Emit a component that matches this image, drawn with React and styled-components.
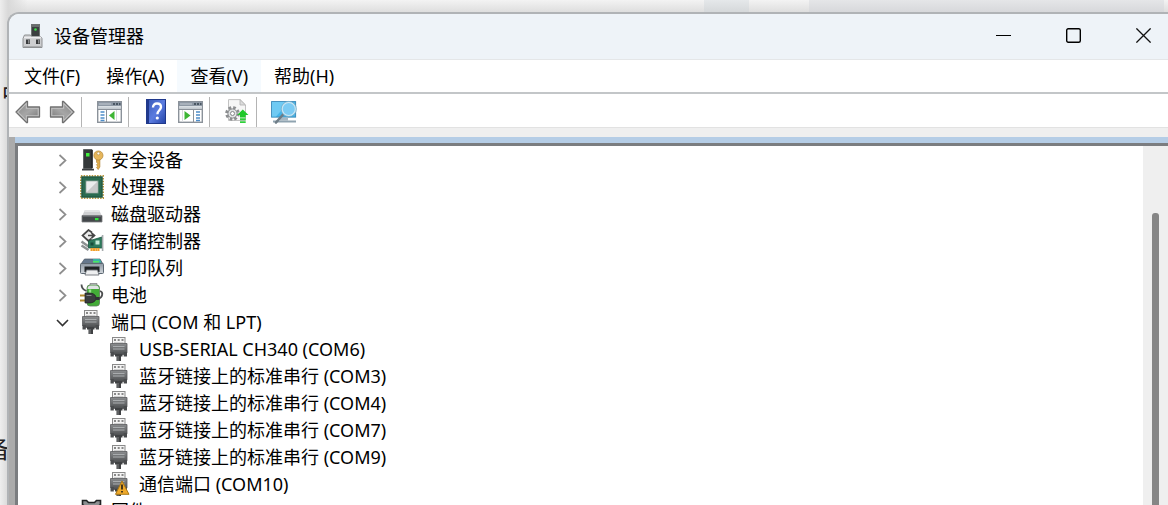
import React from "react";
import styled, { createGlobalStyle } from "styled-components";


const GlobalStyle = createGlobalStyle`
  body {
    margin: 0;
    font-family: "Noto Sans", "Noto Sans CJK SC", sans-serif;
    font-size: 18px;
    color: #000;
  }

  * {
    box-sizing: border-box;
  }
`;


/* 窗口按钮 */
function MinimizeIcon() {
  return (
    <svg width="15" height="15" viewBox="0 0 15 15">
      <path d="M0 7.5H15" stroke="#000" />
    </svg>
  );
}

function MaximizeIcon() {
  return (
    <svg width="15" height="15" viewBox="0 0 15 15">
      <rect x="0.7" y="0.7" width="13.6" height="13.6" rx="1.5" fill="none" stroke="#000" strokeWidth="1.4" />
    </svg>
  );
}

function CloseIcon() {
  return (
    <svg width="15" height="15" viewBox="0 0 15 15">
      <path d="M0.4 0.4L14.6 14.6M14.6 0.4L0.4 14.6" stroke="#111" strokeWidth="1.3" />
    </svg>
  );
}

function AppIcon() {
  return (
    <svg width="22" height="24" viewBox="0 0 22 24">
      <rect x="9.5" y="0.5" width="8" height="12" fill="#3b3f40" stroke="#6d7071" />
      <path d="M10 1h7v2h-7z" fill="#686c6d" />
      <circle cx="13.5" cy="5.5" r="1.3" fill="#3ce04a" />
      <path d="M2.500 11h6l1 1.500h9l1.500 2v9H1v-9z" fill="#cdced0" stroke="#8e9092" />
      <path d="M2 13.500h17" stroke="#ececee" strokeWidth="1.600" />
      <path d="M4 15.500h4v4.500H4zM14 15.500h4v4.500h-4z" fill="#3a3c3e" />
      <path d="M6 16h1.500v3.500H6zM16 16h1.500v3.500h-1.500z" fill="#8a8c8e" />
      <path d="M1.500 22.500h18" stroke="#a9abad" />
    </svg>
  );
}


/* 工具栏图标 */
function ArrowIcon({ flip }) {
  return (
    <svg width="26" height="24" viewBox="0 0 26 24">
      <defs>
        <linearGradient id="arrowFill" x1="0" y1="0" x2="1" y2="1">
          <stop offset="0" stopColor="#8c8c8c" />
          <stop offset="0.5" stopColor="#a6a6a6" />
          <stop offset="1" stopColor="#7a7a7a" />
        </linearGradient>
      </defs>
      <g transform={flip ? "translate(26 0) scale(-1 1)" : undefined}>
        <path d="M1 12L11.500 1.500H12.500V7H24.500V17H12.500V22.500H11.500z" fill="#c2c2c2" stroke="#707070" strokeWidth="1.300" strokeLinejoin="round" />
        <path d="M3.500 12L10.800 4.800V8.700H22.700V15.300H10.800V19.200z" fill="url(#arrowFill)" />
      </g>
    </svg>
  );
}

function PanelIcon({ side }) {
  const left = side === "left";
  return (
    <svg width="25" height="22" viewBox="0 0 25 22">
      <rect x="0.7" y="0.7" width="23.600" height="20.600" fill="#fff" stroke="#8b929a" strokeWidth="1.400" />
      <path d="M1 1h23v4H1z" fill="#8d98a4" />
      <path d="M2 3h12" stroke="#c3cad2" />
      <path d="M16 3h2M19 3h2M22 3h1.500" stroke="#35414d" strokeWidth="1.500" />
      <path d="M1.500 6.500h22" stroke="#cdd4da" strokeWidth="2.400" />
      <path d="M1 8.300h23" stroke="#8b929a" strokeWidth="1.200" />
      {left ? (
        <>
          <path d="M9.500 8.500v12.500" stroke="#8b929a" />
          <path d="M3.500 11h4M3.500 14h4M3.500 17h4M3.500 19.500h4" stroke="#4d8dc9" strokeWidth="1.400" />
          <path d="M12 14.500L17.500 10v9z" fill="#3db534" />
          <path d="M19.500 9v12" stroke="#d8dbde" />
        </>
      ) : (
        <>
          <path d="M15.500 8.500v12.500" stroke="#8b929a" />
          <path d="M18 11h4M18 14h4M18 17h4M18 19.500h4" stroke="#4d8dc9" strokeWidth="1.400" />
          <path d="M12.500 14.500L6.500 10v9z" fill="#3db534" />
          <path d="M4.500 9v12" stroke="#d8dbde" />
        </>
      )}
    </svg>
  );
}

function HelpIcon() {
  return (
    <svg width="20" height="25" viewBox="0 0 20 25">
      <defs>
        <linearGradient id="helpFill" x1="0" y1="0" x2="1" y2="1">
          <stop offset="0" stopColor="#3d5dbb" />
          <stop offset="0.5" stopColor="#5b7ce0" />
          <stop offset="1" stopColor="#2545a8" />
        </linearGradient>
      </defs>
      <rect width="20" height="25" fill="#20398c" />
      <rect x="3" y="1" width="16" height="23" fill="url(#helpFill)" />
      <path d="M7 8.500c0-2.500 1.600-4 4-4s4 1.400 4 3.600c0 3.200-3.600 3.200-3.600 7.200" fill="none" stroke="#fff" strokeWidth="2.400" />
      <circle cx="11.300" cy="19" r="1.600" fill="#fff" />
    </svg>
  );
}

function UpdateIcon() {
  return (
    <svg width="24" height="25" viewBox="0 0 24 25">
      <path d="M3.500 0.600H15L20.500 6V21.500H3.500z" fill="#f6f6f6" stroke="#c2c2c2" />
      <path d="M15 0.600V6H20.500z" fill="#dcdcdc" stroke="#b0b0b0" strokeWidth="0.800" />
      <circle cx="7.500" cy="14.500" r="5.800" fill="none" stroke="#8d8f91" strokeWidth="3" strokeDasharray="2.600 1.950" />
      <circle cx="7.500" cy="14.500" r="4.600" fill="#e0e2e3" stroke="#85878a" />
      <circle cx="7.500" cy="14.500" r="2" fill="#fff" stroke="#85878a" />
      <path d="M17.800 10.500L23.500 16H20.700V18.500H15V16H12.200z" fill="#1fc82a" />
      <path d="M15 19.300h5.700v2H15zM15 22.300h5.700v1.800H15z" fill="#2fd03a" />
    </svg>
  );
}

function ScanIcon() {
  return (
    <svg width="26" height="24" viewBox="0 0 26 24">
      <rect x="0.600" y="1.600" width="24" height="15.500" fill="#45b5ea" stroke="#3e8cba" />
      <path d="M1 2h17L5 16.600H1z" fill="#6fcaf3" />
      <path d="M9 17.500h8v3H9z" fill="#a7b8c3" />
      <path d="M2 21.500h23" stroke="#8fa3b0" strokeWidth="1.800" />
      <path d="M12.500 14L5 22.500" stroke="#6f7d87" strokeWidth="2.600" strokeLinecap="round" />
      <circle cx="17.800" cy="9" r="6.800" fill="#7ccbf3" stroke="#c8e6f4" strokeWidth="1.600" />
      <circle cx="17.800" cy="9" r="7.600" fill="none" stroke="#6fa8c6" strokeWidth="0.700" />
    </svg>
  );
}


/* 设备图标 */
function SecurityIcon() {
  return (
    <svg width="24" height="24" viewBox="0 0 24 24">
      <path d="M3.500 1.500h8.500v19H3.500z" fill="#34383a" stroke="#606466" />
      <path d="M12 2v18" stroke="#17191a" strokeWidth="1.400" />
      <rect x="6" y="5" width="3.500" height="3.500" fill="#42ee3e" />
      <path d="M2 21.700h12" stroke="#3c3f41" strokeWidth="1.800" />
      <path d="M16.500 10h3.400v9l-1.700 2.600-1.700-2.200 1.200-1.200-1.200-1.400 1.200-1.300-1.200-1.300z" fill="#e0ad4c" stroke="#a87a2a" strokeWidth="0.600" />
      <circle cx="18.400" cy="7.500" r="4.600" fill="#e6b65b" stroke="#b08434" strokeWidth="0.700" />
      <circle cx="18.400" cy="5.500" r="1.400" fill="#fff" stroke="#b08434" strokeWidth="0.600" />
    </svg>
  );
}

function ProcessorIcon() {
  return (
    <svg width="24" height="24" viewBox="0 0 24 24">
      <rect x="0.900" y="0.900" width="22.200" height="22.200" fill="none" stroke="#b8963f" strokeWidth="1.800" strokeDasharray="1.500 1.200" />
      <rect x="1.500" y="1.500" width="21" height="21" fill="#2b6b50" />
      <rect x="2" y="2" width="20" height="20" fill="none" stroke="#1f523f" />
      <rect x="6" y="6" width="12" height="12" fill="#dedede" stroke="#7f998b" />
      <path d="M6.500 6.500h11L6.500 17.500z" fill="#ececec" />
      <path d="M17.500 6.500v11H6.500z" fill="#c9c9c9" />
    </svg>
  );
}

function DiskIcon() {
  return (
    <svg width="24" height="24" viewBox="0 0 24 24">
      <path d="M5 8h14l3 6H2z" fill="#cfd0d2" />
      <path d="M5 8h14l1 2H4z" fill="#e4e5e6" />
      <path d="M2 13.500h20v6.500H2z" fill="#43474a" stroke="#7c7f82" strokeWidth="0.800" />
      <path d="M3 14.500h18" stroke="#606467" />
      <rect x="15" y="16" width="3.500" height="2.200" fill="#31e43c" />
    </svg>
  );
}

function StorageIcon() {
  return (
    <svg width="24" height="24" viewBox="0 0 24 24">
      <path d="M2.500 6.500L8.500 1L15 6.500L8.500 12z" fill="#ececec" />
      <path d="M12 3.500L8.500 1L2.500 6.500L8.500 12L11.500 9.500M8 6.500h6.500M11.500 4l3 2.500-3 2.500" fill="none" stroke="#474747" strokeWidth="1.700" />
      <path d="M1.500 12.500l7 5M1.500 16.500l7 4.500" stroke="#8d9192" strokeWidth="2.400" />
      <path d="M8.500 12L22 8v11H8.500z" fill="#2e7a5c" stroke="#195540" strokeWidth="0.800" />
      <path d="M22.600 6v16" stroke="#a5aaad" strokeWidth="1.600" />
      <rect x="15.500" y="11.500" width="4" height="4" fill="#c3ead7" />
      <rect x="10.500" y="13.500" width="3" height="3" fill="#174c3a" />
      <path d="M10.500 20.500h9" stroke="#f0a02c" strokeWidth="3" strokeDasharray="2.200 0.300" />
    </svg>
  );
}

function PrinterIcon() {
  return (
    <svg width="24" height="24" viewBox="0 0 24 24">
      <defs>
        <linearGradient id="printerBody" x1="0" y1="0" x2="0" y2="1">
          <stop offset="0" stopColor="#8d98a3" />
          <stop offset="1" stopColor="#d2d7dc" />
        </linearGradient>
      </defs>
      <path d="M4.500 3h15.500l3 5H1z" fill="#66788d" stroke="#4b5866" strokeWidth="0.700" />
      <path d="M13 3h6.500l2 3.500h-8z" fill="#38b7a6" />
      <path d="M13 5.800h6" stroke="#52ef58" strokeWidth="1.300" />
      <rect x="0.500" y="7.500" width="23" height="10" rx="1" fill="url(#printerBody)" stroke="#5d6872" />
      <path d="M4.500 10.500h15v5.500h-15z" fill="#1f2326" />
      <path d="M6.500 14h11l1.500 5H5z" fill="#eeeff0" stroke="#6d7378" strokeWidth="0.900" />
    </svg>
  );
}

function BatteryIcon() {
  return (
    <svg width="24" height="24" viewBox="0 0 24 24">
      <path d="M10 0.500h7v3h-7z" fill="#d5d7d9" stroke="#727577" strokeWidth="0.700" />
      <rect x="7" y="2" width="12.500" height="21" rx="3" fill="#43ac37" stroke="#5c7f58" strokeWidth="0.800" />
      <path d="M7.500 6c0-2.500 1.500-3.500 3-3.500h5.500c1.500 0 3 1 3 3.500z" fill="#dfe3e3" />
      <path d="M10 6.500v13" stroke="#9be38c" strokeWidth="2.400" />
      <path d="M1.500 1.500c0 3 1 5 5 6.500M18 16c5-1.500 5.500-7 2-8" fill="none" stroke="#4d4f50" strokeWidth="1.800" />
      <path d="M0 12.500h6M0 17.500h6" stroke="#b38b2f" strokeWidth="2" />
      <path d="M5 10h3.500c5 0 7.500 2 7.500 5s-2.500 5-7.500 5H5z" fill="#3a3c3e" stroke="#1d1f20" strokeWidth="0.700" />
      <path d="M15.500 15.500h4" fill="none" stroke="#303234" strokeWidth="3" />
      <path d="M6.500 12.500h5" stroke="#85888a" />
    </svg>
  );
}

function PortIcon({ warning }) {
  return (
    <svg width="24" height="24" viewBox="0 0 24 24">
      <defs>
        <linearGradient id="portBody" x1="0" y1="0" x2="0" y2="1">
          <stop offset="0" stopColor="#8b8d8f" />
          <stop offset="1" stopColor="#4b4d4f" />
        </linearGradient>
      </defs>
      <rect x="4.500" y="0.500" width="12.500" height="7" fill="#f4f4f4" stroke="#8a8a8a" />
      <path d="M6 3h2M9.700 3h2M13.500 3h2" stroke="#666" strokeWidth="1.400" />
      <path d="M6 5.500h9.500" stroke="#d0d0d0" />
      <path d="M2.500 6.500h16.500v9l-2 2H4.500l-2-2z" fill="url(#portBody)" stroke="#5a5c5e" strokeWidth="0.800" />
      <path d="M5 9.500h11.500M5 12h11.500" stroke="#a9acae" />
      <path d="M2.500 15h3.300v4.500H2.500zM15.700 15H19v4.500h-3.300z" fill="#4a4c4e" />
      <path d="M7 17h7.500v2.500h-1.500V24h-4.500v-4.500H7z" fill="#3f4143" />
      <path d="M10 19v5" stroke="#7e8082" />
      {warning && (
        <>
          <path d="M14 9L21 22.300H7.500z" fill="#efa92a" stroke="#a97716" strokeLinejoin="round" />
          <path d="M14 12.500v5M14 19v1.600" stroke="#2b2416" strokeWidth="1.700" />
        </>
      )}
    </svg>
  );
}

function FirmwareIcon() {
  return (
    <svg width="24" height="24" viewBox="0 0 24 24">
      <path d="M2.500 1.500h4l2 2h6l2-2h4v4l-2.500 2v12H5v-12l-2.500-2z" fill="#8b8e90" stroke="#1f2122" strokeWidth="1.600" />
      <path d="M8 8h7v8H8z" fill="#b5b8ba" />
    </svg>
  );
}

function Chevron({ open }) {
  return (
    <svg width="13" height="13" viewBox="0 0 13 13">
      {open ? (
        <path d="M1 4L6.500 9.500L12 4" fill="none" stroke="#333" strokeWidth="1.600" />
      ) : (
        <path d="M3.500 1L9.500 6.500L3.500 12" fill="none" stroke="#8e8e8e" strokeWidth="1.700" />
      )}
    </svg>
  );
}


const menus = [
  { text: "文件(F)" },
  { text: "操作(A)" },
  { text: "查看(V)", hover: true },
  { text: "帮助(H)" },
];

const devices = [
  { name: "安全设备", icon: <SecurityIcon /> },
  { name: "处理器", icon: <ProcessorIcon /> },
  { name: "磁盘驱动器", icon: <DiskIcon /> },
  { name: "存储控制器", icon: <StorageIcon /> },
  { name: "打印队列", icon: <PrinterIcon /> },
  { name: "电池", icon: <BatteryIcon /> },
  {
    name: "端口 (COM 和 LPT)",
    icon: <PortIcon />,
    children: [
      { name: "USB-SERIAL CH340 (COM6)" },
      { name: "蓝牙链接上的标准串行 (COM3)" },
      { name: "蓝牙链接上的标准串行 (COM4)" },
      { name: "蓝牙链接上的标准串行 (COM7)" },
      { name: "蓝牙链接上的标准串行 (COM9)" },
      { name: "通信端口 (COM10)", warning: true },
    ],
  },
  { name: "固件", icon: <FirmwareIcon /> },
];


function App() {
  return (
    <Desktop>
      <GlobalStyle />
      <BackgroundTab />
      <BackgroundPanel />
      <BackgroundText $top={74} $left={2}>品</BackgroundText>
      <BackgroundText $top={436} $left={-14}>备</BackgroundText>

      <Window>
        <TitleBar>
          <AppIcon />
          <Title>设备管理器</Title>
          <WindowButtons>
            <WindowButton type="button" aria-label="最小化"><MinimizeIcon /></WindowButton>
            <WindowButton type="button" aria-label="最大化"><MaximizeIcon /></WindowButton>
            <WindowButton type="button" aria-label="关闭"><CloseIcon /></WindowButton>
          </WindowButtons>
        </TitleBar>

        <MenuBar>
          {menus.map((menu) => (
            <MenuButton key={menu.text} type="button" $hover={menu.hover}>{menu.text}</MenuButton>
          ))}
        </MenuBar>

        <ToolBar>
          <ToolButton type="button" aria-label="后退"><ArrowIcon /></ToolButton>
          <ToolButton type="button" aria-label="前进"><ArrowIcon flip /></ToolButton>
          <ToolDivider />
          <ToolButton type="button" aria-label="显示控制台树"><PanelIcon side="left" /></ToolButton>
          <ToolDivider />
          <ToolButton type="button" aria-label="帮助"><HelpIcon /></ToolButton>
          <ToolButton type="button" aria-label="显示操作窗格"><PanelIcon side="right" /></ToolButton>
          <ToolDivider />
          <ToolButton type="button" aria-label="更新驱动程序"><UpdateIcon /></ToolButton>
          <ToolDivider />
          <ToolButton type="button" aria-label="扫描检测硬件改动"><ScanIcon /></ToolButton>
        </ToolBar>

        <Content>
          <TreePane>
            <Tree>
              {devices.map((device) => (
                <li key={device.name}>
                  <TreeRow>
                    <ExpandButton type="button" aria-label={device.name} aria-expanded={Boolean(device.children)}>
                      <Chevron open={Boolean(device.children)} />
                    </ExpandButton>
                    <DeviceLabel>{device.icon}{device.name}</DeviceLabel>
                  </TreeRow>
                  {device.children && (
                    <SubTree>
                      {device.children.map((child) => (
                        <SubTreeRow key={child.name}>
                          <DeviceLabel><PortIcon warning={child.warning} />{child.name}</DeviceLabel>
                        </SubTreeRow>
                      ))}
                    </SubTree>
                  )}
                </li>
              ))}
            </Tree>
            <ScrollBar>
              <ScrollThumb />
            </ScrollBar>
          </TreePane>
        </Content>
      </Window>
    </Desktop>
  );
}


const Desktop = styled.div`
  position: relative;
  height: 100vh;
  padding: 12px 0 0 7px;
  overflow: hidden;
  display: flex;
  background: linear-gradient(90deg, #eeeeee 0, #d9d9d9 8px, transparent 28px),
    linear-gradient(180deg, #f3f3f3 0, #dedede 12px);
`;

/* 窗口后面露出的内容 */
const BackgroundTab = styled.div`
  position: absolute;
  top: 0;
  left: 704px;
  width: 45px;
  height: 12px;
  background: linear-gradient(#e5e8ea, #d5d8da);
`;

const BackgroundPanel = styled.div`
  position: absolute;
  top: 0;
  left: 809px;
  right: 4px;
  height: 12px;
  background: linear-gradient(#e5e6e8, #d7d8db);
`;

const BackgroundText = styled.span`
  position: absolute;
  top: ${(props) => props.$top}px;
  left: ${(props) => props.$left}px;
  font-size: 24px;
  line-height: 26px;
  color: #222;
`;

const Window = styled.main`
  position: relative;
  flex: 1;
  min-width: 0;
  display: flex;
  flex-direction: column;
  overflow: hidden;
  background: #fff;
  border-top: 2px solid #b0b3b6;
  border-left: 2px solid #b0b3b6;
  border-top-left-radius: 12px;
`;

const TitleBar = styled.header`
  flex: none;
  height: 46px;
  padding: 0 17px 2px 13px;
  display: flex;
  align-items: center;
  background: #eef3f8;
  border-bottom: 1px solid #e4e6e8;
`;

const Title = styled.h1`
  flex: 1;
  margin: 0 0 0 10px;
  font-size: 18px;
  font-weight: 400;
  line-height: 24px;
`;

const WindowButtons = styled.div`
  display: flex;
  gap: 55px;
`;

const WindowButton = styled.button`
  width: 15px;
  height: 24px;
  padding: 0;
  border: 0;
  background: transparent;
  display: flex;
  align-items: center;
`;

const MenuBar = styled.nav`
  flex: none;
  height: 34px;
  padding-left: 2px;
  display: flex;
  align-items: flex-start;
  border-bottom: 2px solid #c3c6c8;
`;

const MenuButton = styled.button`
  height: 32px;
  padding: 0 13px;
  border: 0;
  font: inherit;
  line-height: 32px;
  color: inherit;
  background: ${(props) => (props.$hover ? "#f5fafe" : "transparent")};
`;

const ToolBar = styled.div`
  flex: none;
  height: 34px;
  padding-left: 2px;
  display: flex;
  align-items: center;
  border-bottom: 1px solid #e2e2e2;
`;

const ToolButton = styled.button`
  width: 34px;
  height: 30px;
  padding: 2px 0 0;
  border: 0;
  background: transparent;
  display: flex;
  align-items: center;
  justify-content: center;
`;

const ToolDivider = styled.span`
  width: 1px;
  height: 30px;
  margin: 2px 10px 0 2px;
  background: #b4b4b4;
`;

const Content = styled.div`
  flex: 1;
  min-height: 0;
  display: flex;
  border-top: 9px solid #efefef;
  background: linear-gradient(90deg, #ababab 6px, #b5cde6 6px);
  padding: 6px 0 0 6px;
`;

const TreePane = styled.section`
  flex: 1;
  min-width: 0;
  display: flex;
  align-items: stretch;
  background: #fff;
  border-top: 3px solid #7b7d80;
  border-left: 3px solid #7b7d80;
`;

const Tree = styled.ul`
  flex: 1;
  margin: 0;
  padding: 0 0 0 38px;
  list-style: none;
`;

const TreeRow = styled.div`
  height: 27px;
  display: flex;
  align-items: center;
  gap: 11px;
`;

const ExpandButton = styled.button`
  width: 13px;
  height: 24px;
  padding: 2px 0 0;
  border: 0;
  background: transparent;
  display: flex;
  align-items: center;
`;

const DeviceLabel = styled.span`
  display: flex;
  align-items: center;
  gap: 7px;
  line-height: 26px;
  white-space: nowrap;
`;

const SubTree = styled.ul`
  margin: 0;
  padding: 0 0 0 52px;
  list-style: none;
`;

const SubTreeRow = styled.li`
  height: 27px;
  display: flex;
  align-items: center;
`;

const ScrollBar = styled.div`
  width: 25px;
  padding: 67px 9px 0;
  display: flex;
  background: #efefef;
`;

const ScrollThumb = styled.div`
  flex: 1;
  background: #868686;
  border-radius: 3px 3px 0 0;
`;


export default App;
